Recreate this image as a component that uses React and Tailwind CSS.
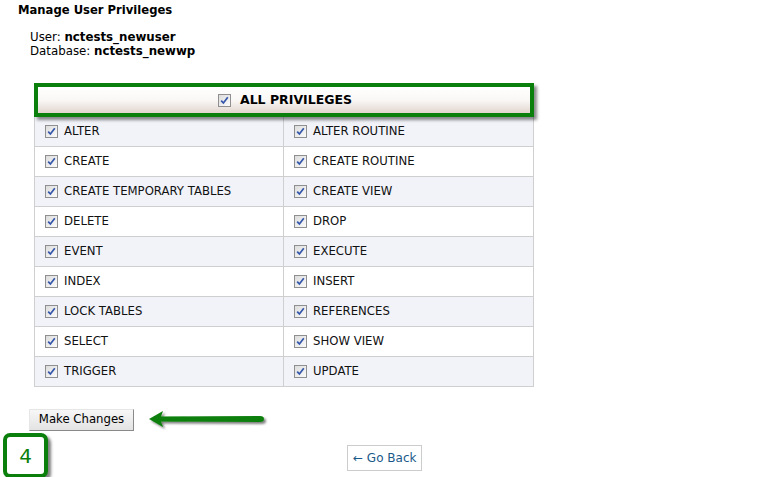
import React from 'react';

const privileges = [
  ['ALTER', 'ALTER ROUTINE'],
  ['CREATE', 'CREATE ROUTINE'],
  ['CREATE TEMPORARY TABLES', 'CREATE VIEW'],
  ['DELETE', 'DROP'],
  ['EVENT', 'EXECUTE'],
  ['INDEX', 'INSERT'],
  ['LOCK TABLES', 'REFERENCES'],
  ['SELECT', 'SHOW VIEW'],
  ['TRIGGER', 'UPDATE'],
];

// old-school checked box, grey frame with blue tick
function Check() {
  return (
    <span className="inline-flex h-[13px] w-[13px] shrink-0 items-center justify-center border border-[#8f8f8f] bg-gradient-to-br from-[#dcdcdc] to-[#fbfbfb]">
      <svg width="9" height="9" viewBox="0 0 9 9">
        <path d="M1.2 4.6 L3.4 7 L7.8 1.2" fill="none" stroke="#3355aa" strokeWidth="1.7" />
      </svg>
    </span>
  );
}

function Cell({ label, shade, last }) {
  return (
    <div
      className={`flex h-[30px] items-center gap-[6px] pl-[10px] border-b border-[#cfcfcf] ${shade ? 'bg-[#f1f3f9]' : 'bg-white'} ${last ? '' : 'border-r'}`}
    >
      <Check />
      <span className="text-[11.7px] text-[#111]">{label}</span>
    </div>
  );
}

export default function App() {
  return (
    <div className="relative h-[477px] w-[758px] overflow-hidden bg-white font-['DejaVu_Sans',Verdana,sans-serif] text-black">
      <div className="pl-[18px] pt-[3px]">
        <h1 className="text-[11.6px] font-bold leading-[15px]">Manage User Privileges</h1>
        <div className="mt-[12px] pl-[12px] text-[11.8px] leading-[14px]">
          <div>
            User: <b>nctests_newuser</b>
          </div>
          <div>
            Database: <b>nctests_newwp</b>
          </div>
        </div>
      </div>

      <div className="ml-[34px] mt-[33px] w-[500px]">
        {/* header row with green highlight */}
        <div className="relative h-[26px]">
          <div className="absolute -top-[8px] left-0 right-0 h-[34px] border-[4px] border-[#0b7f0b] bg-gradient-to-b from-white via-[#faf8f6] to-[#e2d6cf] shadow-[3px_3px_3px_rgba(0,0,0,0.45)] flex items-center justify-center gap-[9px] pl-[2px]">
            <Check />
            <span className="text-[12.5px] font-bold">ALL PRIVILEGES</span>
          </div>
        </div>
        <div className="box-border grid w-[500px] grid-cols-2 border-l border-r border-[#cfcfcf]">
          {privileges.map(([a, b], i) => (
            <React.Fragment key={a}>
              <Cell label={a} shade={i % 2 === 0} />
              <Cell label={b} shade={i % 2 === 0} last />
            </React.Fragment>
          ))}
        </div>
      </div>

      <div className="ml-[29px] mt-[22px] flex items-center gap-[12px]">
        <button className="h-[22px] w-[105px] border border-[#e6e6e6] border-b-[#8a8a8a] border-r-[#8a8a8a] bg-gradient-to-b from-[#f7f7f7] to-[#e3e3e3] text-[11.7px] text-black">
          Make Changes
        </button>
        <svg width="122" height="22" viewBox="0 0 122 22">
          <defs>
            <filter id="sh" x="-10%" y="-30%" width="130%" height="180%">
              <feDropShadow dx="2" dy="2" stdDeviation="1.2" floodColor="#000" floodOpacity="0.5" />
            </filter>
          </defs>
          <path
            d="M3 10 L17 2 L15 7.5 L114 7 Q118 7 118 10 Q118 13 114 13 L15 12.5 L17 18 Z"
            fill="#0b7f0b"
            filter="url(#sh)"
          />
        </svg>
      </div>

      <div className="mt-[2px] flex items-start">
        <div className="ml-[3px] flex h-[45px] w-[45px] items-center justify-center rounded-[7px] border-[4px] border-[#0b7f0b] bg-white shadow-[3px_3px_3px_rgba(0,0,0,0.5)]">
          <span className="text-[20px] text-[#0b7f0b]">4</span>
        </div>
        <div className="ml-[299px] mt-[12px] flex h-[26px] items-center border border-[#cccccc] px-[5px] text-[12px] text-[#1a5a8a]">
          ← Go Back
        </div>
      </div>
    </div>
  );
}
